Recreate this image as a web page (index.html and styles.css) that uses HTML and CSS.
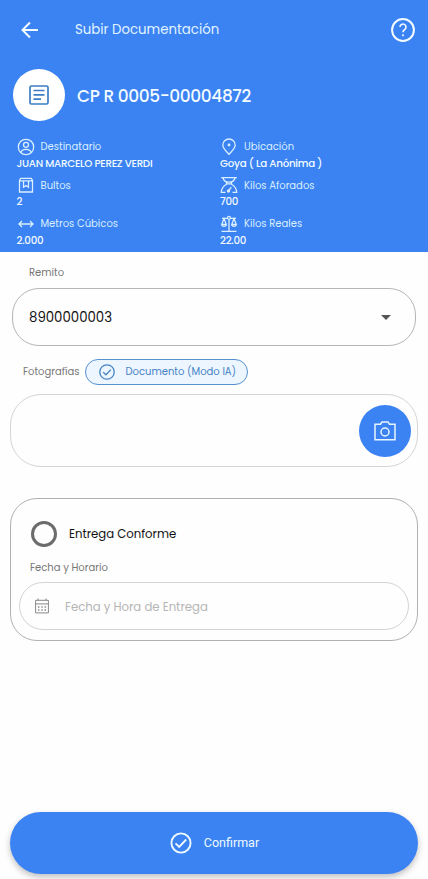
FILE: index.html
```html
<!DOCTYPE html>
<html lang="es">
<head>
    <meta charset="UTF-8">
    <meta name="viewport" content="width=device-width, initial-scale=1.0">
    <link rel="stylesheet" href="styles.css">
    <title>Subir Documentación</title>
</head>
<body>

    <header class="header">
        <div class="topbar">
            <svg class="back" viewBox="0 0 18 18"><path d="M17 9H2M9 1.5L1.5 9L9 16.500"/></svg>
            <span class="topbar-title">Subir Documentación</span>
            <svg class="help" viewBox="0 0 24 24"><circle cx="12" cy="12" r="10.900"/><path class="mark" d="M9 9a3 3 0 1 1 4.700 2.500C12.500 12.400 12 12.900 12 14.300M12 16.200v2"/></svg>
        </div>

        <div class="guide">
            <div class="guide-icon">
                <svg viewBox="0 0 20 20"><rect x="1" y="1" width="18" height="18" rx="1.500"/><path d="M4.500 5.500h11M4.500 9.800h11M4.500 14.200h7.500"/></svg>
            </div>
            <h1 class="guide-number">CP R 0005-00004872</h1>
        </div>

        <div class="details">
            <div class="detail">
                <div class="detail-label">
                    <svg viewBox="0 0 18 18"><circle cx="9" cy="9" r="7.700"/><circle cx="9" cy="6.800" r="2.500"/><path d="M3.800 14.500C4.500 11.800 6.500 11.300 9 11.300s4.500.5 5.200 3.200"/></svg>
                    <span>Destinatario</span>
                </div>
                <div class="detail-value">JUAN MARCELO PEREZ VERDI</div>
            </div>
            <div class="detail">
                <div class="detail-label">
                    <svg viewBox="0 0 18 18"><path d="M9 16.300C5.500 12.500 2.800 10 2.800 7.200a6.200 6.200 0 0 1 12.400 0C15.200 10 12.500 12.500 9 16.300z"/><circle class="solid" cx="9" cy="7" r="1.400"/></svg>
                    <span>Ubicación</span>
                </div>
                <div class="detail-value">Goya ( La Anónima )</div>
            </div>
            <div class="detail">
                <div class="detail-label">
                    <svg viewBox="0 0 18 18"><path d="M2.500 4.500v11.500h13V4.500L14.300 2.300H3.700L2.500 4.500zM2.500 4.800h13M6.500 5v6.300L9 9.500l2.500 1.800V5"/></svg>
                    <span>Bultos</span>
                </div>
                <div class="detail-value">2</div>
            </div>
            <div class="detail">
                <div class="detail-label">
                    <svg viewBox="0 0 18 18"><path d="M1.200 1.700h15.600M3 2c.7 3.200 3 4.200 6 4.200s5.300-1 6-4.200M6.500 6.200v1.600h5V6.200M6.800 8C3.500 9.800 1.500 12.300 1.300 16.300h4.200M11.200 8c3.300 1.800 5.300 4.300 5.500 8.300h-4.200M8.500 15l2.800-3.800"/><circle class="solid" cx="8.500" cy="15" r="1.700"/></svg>
                    <span>Kilos Aforados</span>
                </div>
                <div class="detail-value">700</div>
            </div>
            <div class="detail">
                <div class="detail-label">
                    <svg viewBox="0 0 18 18"><path d="M2 9h14M5 6L2 9l3 3M13 6l3 3-3 3"/></svg>
                    <span>Metros Cúbicos</span>
                </div>
                <div class="detail-value">2.000</div>
            </div>
            <div class="detail">
                <div class="detail-label">
                    <svg viewBox="0 0 18 18"><path d="M1.500 16.300h15M9 4v12M2 3.300h5.500M10.500 3.300H16M4 3.500L1.700 9.500h4.600L4 3.500zM14 3.500l-2.300 6h4.600L14 3.500zM1.700 9.800c.5 2 4.100 2 4.600 0M11.700 9.800c.5 2 4.100 2 4.600 0"/><circle cx="9" cy="2.800" r="1.500"/></svg>
                    <span>Kilos Reales</span>
                </div>
                <div class="detail-value">22.00</div>
            </div>
        </div>
    </header>

    <main class="form">
        <div class="label label-remito">Remito</div>
        <div class="select">
            <span>8900000003</span>
            <span class="caret"></span>
        </div>

        <div class="photos-head">
            <span class="label">Fotografías</span>
            <div class="chip">
                <svg viewBox="0 0 16 16"><circle cx="8" cy="8" r="7.200"/><path d="M4.200 8.100l2.700 2.700 5-5.200"/></svg>
                <span>Documento (Modo IA)</span>
            </div>
        </div>

        <div class="photos">
            <div class="camera">
                <svg viewBox="0 0 22 20"><path d="M1 3.200h5.500L8 1h6l1.500 2.200H21v15.600H1z"/><circle cx="11" cy="11" r="4"/></svg>
            </div>
        </div>

        <div class="delivery">
            <div class="radio-row">
                <span class="radio"></span>
                <span>Entrega Conforme</span>
            </div>
            <div class="label label-fecha">Fecha y Horario</div>
            <div class="date-input">
                <svg viewBox="0 0 14 16"><path d="M.6 2.300h12.800v12.600H.6zM.6 5.900h12.800M3 .5v2M11 .5v2"/><path class="dots" d="M3 9h8M3 12h8"/></svg>
                <span>Fecha y Hora de Entrega</span>
            </div>
        </div>
    </main>

    <div class="confirm">
        <svg viewBox="0 0 22 22"><circle cx="11" cy="11" r="9.600"/><path d="M5.500 11.300l3.700 3.700 7-7.500"/></svg>
        <span>Confirmar</span>
    </div>

</body>
</html>
```

FILE: styles.css
```css
* {
    box-sizing: border-box;
}

body {
    margin: 0;
    height: 879px;
    display: flex;
    flex-direction: column;
    overflow: hidden;
    background-color: #fefefe;
    color: #111;
    font-family: Poppins, Inter, sans-serif;
    white-space: nowrap;
}

svg {
    flex: none;
    fill: none;
    stroke: currentColor;
}

.solid {
    fill: currentColor;
    stroke: none;
}

.header {
    height: 252px;
    background-color: #3b82f3;
    color: #f2fbff;
}

.topbar {
    display: flex;
    align-items: center;
    height: 59px;
    padding: 0 13px 0 20.5px;
}

.back {
    width: 18px;
    height: 18px;
    margin-right: 36.5px;
    stroke-width: 2;
}

.topbar-title {
    font-size: 13.3px;
    color: #e2f4ff;
}

.help {
    width: 24px;
    height: 24px;
    margin-left: auto;
    stroke-width: 2;
}

.mark {
    stroke-width: 1.6;
}

.guide {
    display: flex;
    align-items: center;
    gap: 12.5px;
    padding: 10px 12.5px 0;
}

.guide-icon {
    display: flex;
    align-items: center;
    justify-content: center;
    width: 52px;
    height: 52px;
    border-radius: 50%;
    background-color: #fff;
    color: #3d7dc4;
}

.guide-icon svg {
    width: 20px;
    height: 20px;
    stroke-width: 1.7;
}

.guide-number {
    margin: 0;
    padding-top: 1px;
    font-size: 17px;
    font-weight: 500;
    letter-spacing: -0.4px;
}

.details {
    display: grid;
    grid-template-columns: 203.5px 1fr;
    row-gap: 3.5px;
    padding: 16.5px 0 0 16.5px;
}

.detail {
    height: 35px;
}

.detail-label {
    display: flex;
    align-items: center;
    gap: 6px;
    height: 18px;
    font-size: 10px;
    color: #d9efff;
}

.detail-label span {
    padding-top: 1px;
}

.detail-label svg {
    width: 18px;
    height: 18px;
    stroke-width: 1.3;
}

.detail-value {
    font-size: 10.3px;
    font-weight: 500;
    line-height: 15.5px;
    letter-spacing: -0.28px;
}

.form {
    padding: 14px 10px 0;
}

.label {
    font-size: 10px;
    line-height: 14px;
    color: #777;
}

.label-remito {
    padding-left: 19px;
}

.select {
    display: flex;
    align-items: center;
    justify-content: space-between;
    height: 58px;
    margin: 8px 2px 0;
    padding: 1px 24px 0 16px;
    border: 1px solid #b5b5b5;
    border-radius: 27px;
    font-size: 13.3px;
}

.caret {
    border: 5px solid transparent;
    border-top-color: #555;
    border-bottom: 0;
}

.photos-head {
    display: flex;
    align-items: center;
    gap: 6px;
    height: 27px;
    margin-top: 12px;
    padding-left: 13px;
}

.chip {
    display: flex;
    align-items: center;
    gap: 10px;
    width: 163px;
    height: 26px;
    padding-left: 13px;
    border: 1px solid #5590d0;
    border-radius: 13px;
    background-color: #edf5fe;
    color: #4583c5;
    font-size: 10px;
}

.chip svg {
    width: 16px;
    height: 16px;
    stroke-width: 1.3;
}

.photos {
    display: flex;
    align-items: center;
    justify-content: flex-end;
    height: 73px;
    margin-top: 9px;
    padding-right: 6px;
    border: 1px solid #d5d5d5;
    border-radius: 31px;
}

.camera {
    display: flex;
    align-items: center;
    justify-content: center;
    width: 52px;
    height: 52px;
    border-radius: 50%;
    background-color: #3b82f3;
    color: #e8f5ff;
}

.camera svg {
    width: 22px;
    height: 20px;
    stroke-width: 1.5;
}

.delivery {
    height: 143px;
    margin-top: 31px;
    padding: 22px 8px 0;
    border: 1px solid #b0b0b0;
    border-radius: 27px;
}

.radio-row {
    display: flex;
    align-items: center;
    gap: 12px;
    padding-left: 12px;
    font-size: 11.7px;
}

.radio {
    width: 26px;
    height: 26px;
    border: 3px solid #6c6c6c;
    border-radius: 50%;
}

.label-fecha {
    margin-top: 14px;
    padding-left: 11px;
}

.date-input {
    display: flex;
    align-items: center;
    gap: 16px;
    height: 48px;
    margin-top: 7px;
    padding-left: 15px;
    border: 1px solid #d3d3d3;
    border-radius: 24px;
    color: #b5b5b5;
    font-size: 11.7px;
}

.date-input span {
    padding-top: 2px;
}

.date-input svg {
    width: 14px;
    height: 16px;
    color: #888;
}

.dots {
    stroke-width: 1.4;
    stroke-dasharray: 1.4 1.9;
}

.confirm {
    display: flex;
    flex: none;
    align-items: center;
    justify-content: center;
    gap: 12px;
    height: 62px;
    margin: auto 10px 5.5px;
    padding-left: 1px;
    border-radius: 31px;
    background-color: #3b82f3;
    box-shadow: 0 3px 6px rgba(0, 0, 0, 0.25);
    color: #eefaff;
    font-family: Roboto, sans-serif;
    font-size: 12.5px;
}

.confirm svg {
    width: 22px;
    height: 22px;
    stroke-width: 1.9;
}
```
